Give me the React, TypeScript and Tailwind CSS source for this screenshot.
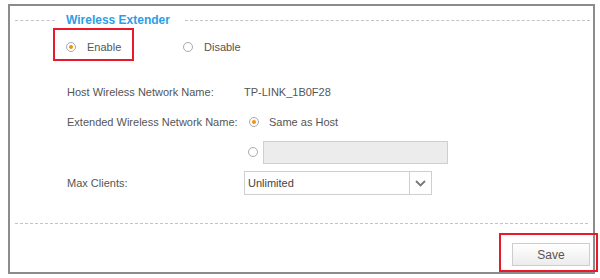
import { useState } from 'react';

function Radio({ checked }: { checked: boolean }) {
  return (
    <span className="flex h-[10px] w-[10px] shrink-0 items-center justify-center rounded-full border border-[#a9a9a9] bg-white">
      {checked && <span className="h-[4px] w-[4px] rounded-full bg-[#f29111]" />}
    </span>
  );
}

export default function App() {
  const [enabled] = useState(true);

  return (
    <div className="relative h-[278px] w-[600px] overflow-hidden bg-white font-['Liberation_Sans',Arial,sans-serif] text-[11px] text-[#555]">
      <div className="ml-[8px] mt-[4px] flex h-[270px] w-[587px] flex-col border-2 border-[#8c8c8c] bg-white">
        {/* Title */}
        <div className="flex h-[28px] items-center pl-[5px] pr-[3px]">
          <div className="w-[40px] border-t border-dashed border-[#c4c4c4]" />
          <span className="ml-[11px] mr-[15px] text-[12px] font-bold text-[#2c9ee6]">Wireless Extender</span>
          <div className="flex-1 border-t border-dashed border-[#c4c4c4]" />
        </div>

        {/* Enable / Disable */}
        <div className="flex h-[26px] items-center pl-[56px]">
          <div className="flex w-[117px] items-center">
            <Radio checked={enabled} />
            <span className="ml-[11px]">Enable</span>
          </div>
          <div className="flex items-center">
            <Radio checked={!enabled} />
            <span className="ml-[11px]">Disable</span>
          </div>
        </div>

        <div className="mt-[17px] flex flex-col pl-[57px]">
          <div className="flex h-[30px] items-center">
            <span className="w-[177px]">Host Wireless Network Name:</span>
            <span>TP-LINK_1B0F28</span>
          </div>
          <div className="flex h-[30px] items-center">
            <span className="w-[182px]">Extended Wireless Network Name:</span>
            <Radio checked />
            <span className="ml-[10px]">Same as Host</span>
          </div>
          <div className="flex h-[30px] items-center pl-[181px]">
            <Radio checked={false} />
            <div className="ml-[5px] h-[23px] w-[185px] border border-[#cfcfcf] bg-[#ececec]" />
          </div>
          <div className="flex h-[32px] items-center">
            <span className="w-[177px]">Max Clients:</span>
            <div className="flex h-[24px] w-[188px] items-stretch border border-[#cfcfcf] bg-white">
              <span className="flex flex-1 items-center pl-[3px] text-[#444]">Unlimited</span>
              <span className="flex w-[22px] items-center justify-center border-l border-[#cfcfcf]">
                <svg width="11" height="7" viewBox="0 0 11 7">
                  <path d="M1 1l4.5 4.5L10 1" fill="none" stroke="#777" strokeWidth="1.8" />
                </svg>
              </span>
            </div>
          </div>
        </div>

        <div className="mx-[5px] mt-[24px] border-t border-dashed border-[#c4c4c4]" />

        <div className="mt-[19px] flex justify-end pr-[3px]">
          <button className="h-[23px] w-[78px] border border-[#cdcdcd] bg-gradient-to-b from-white to-[#ececec] text-[12px] text-[#555]">
            Save
          </button>
        </div>
      </div>

      {/* annotation boxes */}
      <div className="absolute left-[53px] top-[28px] h-[33px] w-[81px] border-2 border-[#e8192a]" />
      <div className="absolute left-[499px] top-[233px] h-[39px] w-[99px] border-2 border-[#e8192a]" />
    </div>
  );
}
